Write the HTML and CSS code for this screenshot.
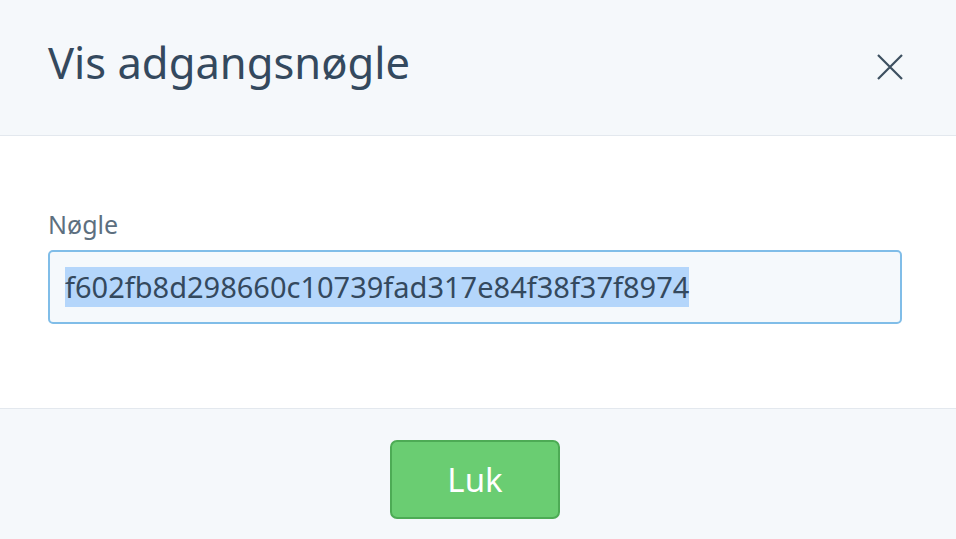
FILE: index.html
```html
<!DOCTYPE html>
<html>
<head>
    <title>Vis adgangsnøgle</title>
    <meta charset="utf-8"/>
    <link rel="stylesheet" href="styles.css">
</head>
<body>
    <div class="modal">
        <div class="modal-header">
            <h1 class="modal-title">Vis adgangsnøgle</h1>
            <button class="close-btn" aria-label="Luk">
                <svg width="28" height="28" viewBox="0 0 28 28">
                    <path d="M2 2 L26 26 M26 2 L2 26" stroke="#3d4f60" stroke-width="2.2" fill="none"/>
                </svg>
            </button>
        </div>
        <div class="modal-body">
            <label class="field-label">Nøgle</label>
            <div class="key-field"><span class="key-text">f602fb8d298660c10739fad317e84f38f37f8974</span></div>
        </div>
        <div class="modal-footer">
            <button class="btn-close">Luk</button>
        </div>
    </div>
</body>
</html>
```

FILE: styles.css
```css
body {
    margin: 0;
    background-color: #ffffff;
    font-family: "Noto Sans", "Open Sans", sans-serif;
    color: #34495e;
}

.modal {
    display: flex;
    flex-direction: column;
    height: 539px;
}

.modal-header {
    height: 136px;
    background-color: #f5f8fb;
    border-bottom: 1px solid #e3e8ee;
    display: flex;
    align-items: center;
    justify-content: space-between;
    padding: 0 52px 0 48px;
    box-sizing: border-box;
}

.modal-title {
    margin: 0;
    font-weight: 400;
    font-size: 43.5px;
    color: #34495e;
    position: relative;
    top: -6px;
}

.close-btn {
    border: none;
    background: none;
    padding: 0;
    display: flex;
    position: relative;
    top: -1px;
}

.modal-body {
    height: 273px;
    padding: 72px 54px 0 48px;
    box-sizing: border-box;
    border-bottom: 1px solid #e3e8ee;
}

.field-label {
    display: block;
    font-size: 25px;
    color: #5d6f7f;
    line-height: 32px;
    margin-bottom: 10px;
}

.key-field {
    height: 74px;
    box-sizing: border-box;
    border: 2px solid #80bde8;
    border-radius: 5px;
    background-color: #f5f9fc;
    padding: 0 15px;
    display: flex;
    align-items: center;
    font-size: 29px;
    color: #34495e;
}

.key-text {
    background-color: #b4d6fb;
    line-height: 40px;
}

.modal-footer {
    flex: 1;
    background-color: #f5f8fb;
    display: flex;
    justify-content: center;
    padding-top: 31px;
    box-sizing: border-box;
}

.btn-close {
    width: 170px;
    height: 79px;
    margin-right: 6px;
    background-color: #6acd72;
    border: 2px solid #4dab55;
    border-radius: 7px;
    color: #ffffff;
    font-family: "Noto Sans", "Open Sans", sans-serif;
    font-size: 33px;
}
```
